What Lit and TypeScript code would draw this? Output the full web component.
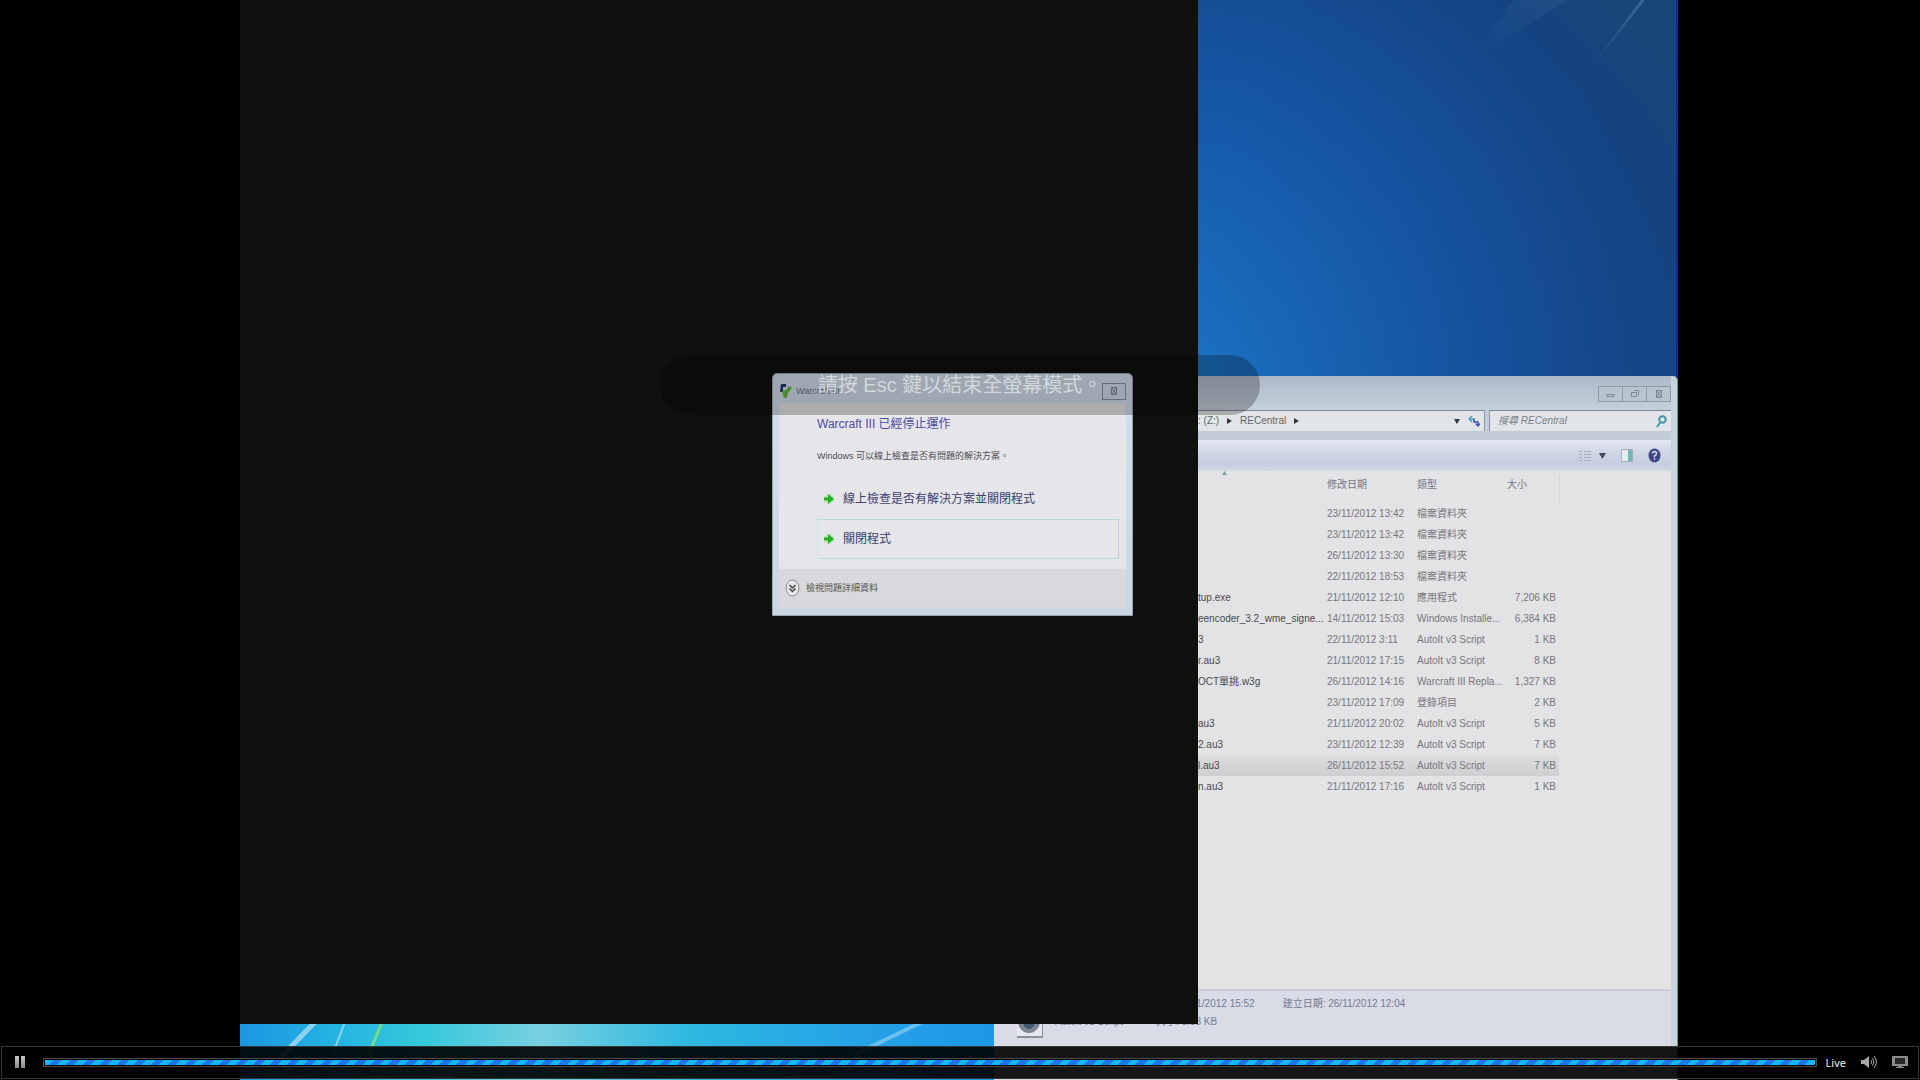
import { LitElement, html, css, svg, nothing } from "lit";
import { customElement } from "lit/decorators.js";
import { classMap } from "lit/directives/class-map.js";

interface FileRow {
  name: string;
  date: string;
  type: string;
  size: string;
  selected?: boolean;
}

const FILES: FileRow[] = [
  { name: "", date: "23/11/2012 13:42", type: "檔案資料夾", size: "" },
  { name: "", date: "23/11/2012 13:42", type: "檔案資料夾", size: "" },
  { name: "", date: "26/11/2012 13:30", type: "檔案資料夾", size: "" },
  { name: "", date: "22/11/2012 18:53", type: "檔案資料夾", size: "" },
  { name: "tup.exe", date: "21/11/2012 12:10", type: "應用程式", size: "7,206 KB" },
  { name: "eencoder_3.2_wme_signe...", date: "14/11/2012 15:03", type: "Windows Installe...", size: "6,384 KB" },
  { name: "3", date: "22/11/2012 3:11", type: "AutoIt v3 Script", size: "1 KB" },
  { name: "r.au3", date: "21/11/2012 17:15", type: "AutoIt v3 Script", size: "8 KB" },
  { name: "OCT單挑.w3g", date: "26/11/2012 14:16", type: "Warcraft III Repla...", size: "1,327 KB" },
  { name: "", date: "23/11/2012 17:09", type: "登錄項目", size: "2 KB" },
  { name: "au3", date: "21/11/2012 20:02", type: "AutoIt v3 Script", size: "5 KB" },
  { name: "2.au3", date: "23/11/2012 12:39", type: "AutoIt v3 Script", size: "7 KB" },
  { name: "l.au3", date: "26/11/2012 15:52", type: "AutoIt v3 Script", size: "7 KB", selected: true },
  { name: "n.au3", date: "21/11/2012 17:16", type: "AutoIt v3 Script", size: "1 KB" },
];

const goArrow = svg`
  <circle cx="6" cy="7" r="5" fill="#b9e8b4"/>
  <path d="M1 5.500h4V2l6 5-6 5v-3.500H1z" fill="#2bb024"/>`;

@customElement("explorer-window")
export class ExplorerWindow extends LitElement {
  static styles = css`
    :host {
      display: flex;
      flex-direction: column;
      box-sizing: border-box;
      padding-right: 6px;
      border-right: 1px solid #6f9c93;
      border-radius: 0 5px 0 0;
      background: #c6d5dc;
      color: #77777d;
      font: 10px/16px "Liberation Sans", "Noto Sans CJK TC", sans-serif;
      overflow: hidden;
    }
    button {
      font: inherit;
      color: inherit;
      padding: 0;
      border: 0;
      background: none;
      display: flex;
      align-items: center;
      justify-content: center;
    }
    svg { display: block; }
    .caption {
      display: flex;
      justify-content: flex-end;
      padding: 10px 0 8px;
      background: linear-gradient(#adb9c8, #c5d0dc);
    }
    .caption button {
      width: 25px;
      height: 16px;
      box-sizing: border-box;
      border: 1px solid #8e9aa8;
      margin-left: -1px;
      background: #b9c4d1;
    }
    .nav {
      display: flex;
      gap: 4px;
      padding: 0 0 9px 204px;
      background: #c2ccd9;
    }
    .address, .search {
      display: flex;
      align-items: center;
      height: 21px;
      box-sizing: border-box;
      border-top: 1px solid #7f8994;
      background: #e1e4e9;
    }
    .address { flex: 1; gap: 8px; padding: 0 4px 0 0; border-right: 1px solid #8f99a6; }
    .address .crumb { color: #5d6b66; }
    .grow { flex: 1; }
    .search { width: 182px; padding: 0 4px 0 8px; border-left: 1px solid #8f99a6; }
    .search input {
      flex: 1;
      min-width: 0;
      border: 0;
      padding: 0;
      background: none;
      font: inherit;
      font-style: italic;
    }
    .search input::placeholder { color: #7b8287; opacity: 1; }
    .tools {
      display: flex;
      justify-content: flex-end;
      align-items: center;
      gap: 14px;
      height: 31px;
      padding-right: 10px;
      background: linear-gradient(#e2e7f0, #cdd4e4 45%, #c6cde0 80%, #d3d9e6);
    }
    .tools .view { gap: 8px; }
    .body {
      flex: 1;
      padding-left: 204px;
      background: #e3e2e5;
    }
    table { border-collapse: collapse; table-layout: fixed; width: 361px; }
    th, td { padding: 0; height: 21px; font-weight: 400; text-align: left; white-space: nowrap; }
    thead th { height: 28px; padding-bottom: 8px; box-sizing: border-box; vertical-align: middle; color: #76768a; }
    thead .size { text-align: left; padding-left: 2px; border-right: 1px solid #d5d5da; }
    .name { width: 129px; color: #4a4a4a; }
    .date { width: 90px; }
    .type { width: 88px; }
    .size { width: 54px; text-align: right; padding-right: 3px; }
    .selected td { background: linear-gradient(#dcdbde, #cfcfd2); }
    .sort { display: block; margin: 0 0 0 24px; }
    .details {
      display: grid;
      grid-template-columns: 26px 65px max-content max-content;
      column-gap: 12px;
      align-items: start;
      height: 91px;
      box-sizing: border-box;
      padding: 5px 0 0 23px;
      border-top: 2px solid #cdced5;
      background: #d9dce6;
      color: #727a94;
      white-space: nowrap;
    }
    .details .icon { margin-top: 14px; }
    .details p { margin: 0 0 2px; }
    .details .indent { padding-left: 24px; }
    .details .created { padding-left: 16px; }
  `;

  render() {
    return html`
      <div class="caption">
        <button aria-label="最小化"><svg width="10" height="8" viewBox="0 0 10 8" fill="none" stroke="#7e8894"><path d="M1 4.500h7v2H1z"/></svg></button>
        <button aria-label="最大化"><svg width="10" height="8" viewBox="0 0 10 8" fill="none" stroke="#7e8894"><path d="M1.500 2.500h5v4h-5zM4.500 .5h4v5"/></svg></button>
        <button aria-label="關閉"><svg width="10" height="10" viewBox="0 0 10 10" fill="none" stroke="#7e8894"><path d="M2.500 1.500h5v7h-5zM3 2l4 6M7 2L3 8"/></svg></button>
      </div>
      <div class="nav">
        <div class="address">
          <span class="crumb">: (Z:)</span>
          <svg width="5" height="8" viewBox="0 0 5 8"><path d="M0 1l5 3-5 3z" fill="#33363c"/></svg>
          <span class="crumb">RECentral</span>
          <svg width="5" height="8" viewBox="0 0 5 8"><path d="M0 1l5 3-5 3z" fill="#33363c"/></svg>
          <span class="grow"></span>
          <svg width="6" height="6" viewBox="0 0 6 6"><path d="M0 1h6L3 6z" fill="#33363c"/></svg>
          <button aria-label="重新整理">
            <svg width="12" height="12" viewBox="0 0 12 12" fill="none" stroke-width="1.500"><path d="M4 1L1 4l3 3M1 4h5v3" stroke="#4fa3b8"/><path d="M6 4v3h4V11M7.500 8.500L10 11l2-2.500" stroke="#4a55b4"/></svg>
          </button>
        </div>
        <label class="search">
          <input type="text" placeholder="搜尋 RECentral" aria-label="搜尋 RECentral" />
          <svg width="11" height="13" viewBox="0 0 11 13" fill="none" stroke="#4695a6" stroke-width="2"><circle cx="6.500" cy="4.500" r="3.200"/><path d="M4.500 7L1 12"/></svg>
        </label>
      </div>
      <div class="tools">
        <button class="view" aria-label="變更檢視">
          <svg width="12" height="12" viewBox="0 0 12 12" stroke="#a9afbd"><path d="M0 1.500h3M5 1.500h7M0 4.500h3M5 4.500h7M0 7.500h3M5 7.500h7M0 10.500h3M5 10.500h7"/></svg>
          <svg width="7" height="7" viewBox="0 0 7 7"><path d="M0 1h7L3.500 7z" fill="#444a5c"/></svg>
        </button>
        <button aria-label="預覽窗格">
          <svg width="14" height="15" viewBox="0 0 14 15"><path d="M1.500 1.500h11v12h-11z" fill="#e4eaf0" stroke="#a2b0bc"/><path d="M8 2h4v11H8z" fill="#6fb7b0"/></svg>
        </button>
        <button aria-label="說明">
          <svg width="13" height="15" viewBox="0 0 13 15"><ellipse cx="6.500" cy="7.500" rx="6" ry="7" fill="#3c4784"/><path d="M4.500 5.500q0-2 2-2t2 2q0 1.300-2 2.500v1.500M6.500 10.500v1.500" fill="none" stroke="#d3d8ec" stroke-width="1.500"/></svg>
        </button>
      </div>
      <div class="body">
        <svg class="sort" width="5" height="4" viewBox="0 0 5 4"><path d="M2.500 0L5 4H0z" fill="#7fa0a5"/></svg>
        <table>
          <thead>
            <tr>
              <th class="name" aria-label="名稱"></th>
              <th class="date">修改日期</th>
              <th class="type">類型</th>
              <th class="size">大小</th>
            </tr>
          </thead>
          <tbody>
            ${FILES.map(
              (f) => html`<tr class=${classMap({ selected: !!f.selected })}>
                <td class="name">${f.name || nothing}</td>
                <td class="date">${f.date}</td>
                <td class="type">${f.type}</td>
                <td class="size">${f.size || nothing}</td>
              </tr>`
            )}
          </tbody>
        </table>
      </div>
      <div class="details">
        <svg class="icon" width="26" height="28" viewBox="0 0 26 28"><path d="M0 0h26v27H0z" fill="#e6e7ec"/><path d="M0 27h26V2" fill="none" stroke="#8c9097" stroke-width="2"/><ellipse cx="12" cy="11" rx="11" ry="12" fill="#7b858f"/><ellipse cx="12" cy="11" rx="6" ry="8" fill="#3f5870"/></svg>
        <div><p>l.au3</p><p>AutoIt v3 Script</p></div>
        <div><p>修改日期: 26/11/2012 15:52</p><p class="indent">大小: 6.58 KB</p></div>
        <div class="created"><p>建立日期: 26/11/2012 12:04</p></div>
      </div>
    `;
  }
}

@customElement("crash-dialog")
export class CrashDialog extends LitElement {
  static styles = css`
    :host {
      display: flex;
      flex-direction: column;
      box-sizing: border-box;
      padding: 0 6px 8px;
      border: 1px solid #98a5b2;
      border-radius: 5px 5px 0 0;
      background: linear-gradient(#d3dfee, #ccd6e0);
      color: #4b4b52;
      font: 12px/16px "Liberation Sans", "Noto Sans CJK TC", sans-serif;
    }
    svg { display: block; }
    button {
      font: inherit;
      color: inherit;
      border: 0;
      background: none;
      padding: 0;
      display: flex;
      align-items: center;
    }
    .caption { display: flex; align-items: center; gap: 3px; height: 24px; padding-top: 5px; }
    .caption span { flex: 1; color: #6d7884; font-size: 9px; }
    .caption .close {
      justify-content: center;
      width: 24px;
      height: 17px;
      box-sizing: border-box;
      border: 1px solid #8a93a0;
    }
    .content {
      flex: 1;
      padding: 12px 7px 8px 38px;
      background: #e6e6ea;
    }
    h1 { margin: 0 0 15px; font-size: 12px; line-height: 18px; font-weight: 400; color: #4a4aa0; }
    p { margin: 0 0 15px; font-size: 9px; }
    .command {
      gap: 8px;
      width: 100%;
      height: 40px;
      box-sizing: border-box;
      padding: 0 5px;
      border: 1px solid transparent;
      color: #3c3f6e;
    }
    .focused { border-color: #b4dde2 #c3cbe0 #b4dde2 #c9e4e8; }
    .more {
      gap: 6px;
      height: 38px;
      padding: 0 6px;
      background: #d9d8dc;
      color: #56564c;
      font-size: 9px;
    }
  `;

  render() {
    return html`
      <div class="caption">
        <svg width="14" height="16" viewBox="0 0 14 16"><path d="M2 1h5v3H4v5H1z" fill="#2a3270"/><path d="M3 8l4-1 3-4 3 2-4 5-1 5H5z" fill="#66b83c"/></svg>
        <span>Warcraft III</span>
        <button class="close" aria-label="關閉"><svg width="10" height="10" viewBox="0 0 10 10" fill="none" stroke="#7e8894"><path d="M2.500 1.500h5v7h-5zM3 2l4 6M7 2L3 8"/></svg></button>
      </div>
      <div class="content">
        <h1>Warcraft III 已經停止運作</h1>
        <p>Windows 可以線上檢查是否有問題的解決方案。</p>
        <button class="command"><svg width="12" height="14" viewBox="0 0 12 14">${goArrow}</svg>線上檢查是否有解決方案並關閉程式</button>
        <button class="command focused"><svg width="12" height="14" viewBox="0 0 12 14">${goArrow}</svg>關閉程式</button>
      </div>
      <button class="more">
        <svg width="15" height="18" viewBox="0 0 15 18" fill="none"><ellipse cx="7.500" cy="9" rx="6.500" ry="8" fill="#e6e6e9" stroke="#8d8d92"/><path d="M4.500 6l3 3 3-3M4.500 9.500l3 3 3-3" stroke="#444" stroke-width="1.500"/></svg>
        檢視問題詳細資料
      </button>
    `;
  }
}

@customElement("control-bar")
export class ControlBar extends LitElement {
  static styles = css`
    :host {
      display: flex;
      align-items: center;
      box-sizing: border-box;
      height: 33px;
      padding: 0 10px 0 13px;
      border: 1px solid #363636;
      background: rgba(0, 0, 0, 0.9);
      color: #ececec;
      font: 11px/15px "Noto Sans", sans-serif;
    }
    button { border: 0; padding: 0; background: none; display: block; }
    svg { display: block; }
    .track {
      flex: 1;
      height: 9px;
      box-sizing: border-box;
      margin: 0 9px 0 17px;
      padding: 1px;
      border: 1px solid #4a4a4a;
      background: #000;
    }
    .fill {
      height: 5px;
      background: repeating-linear-gradient(135deg, #16b6f8 0 6px, #1c78ea 6px 12px);
    }
    .volume { margin-left: 15px; }
    .screen { margin-left: 14px; }
  `;

  render() {
    return html`
      <button aria-label="暫停">
        <svg width="11" height="13" viewBox="0 0 11 13"><defs><linearGradient id="g" x2="0" y2="1"><stop stop-color="#c8c8c8"/><stop offset="1" stop-color="#8a8a8a"/></linearGradient></defs><path d="M0 0h4v12H0zM6 0h4v12H6z" fill="url(#g)"/></svg>
      </button>
      <div class="track" role="progressbar" aria-label="Live"><div class="fill"></div></div>
      <span>Live</span>
      <button class="volume" aria-label="音量">
        <svg width="17" height="15" viewBox="0 0 17 15" fill="none" stroke="#a8a8a8"><path d="M0 5h3l5-4v12L3 9H0z" fill="#a8a8a8" stroke="none"/><path d="M10 5q1.500 2 0 4M11.500 3q3 4 0 8M13 1q5 6 0 12"/></svg>
      </button>
      <button class="screen" aria-label="結束全螢幕">
        <svg width="16" height="13" viewBox="0 0 16 13"><path d="M0 0h16v10H0z" fill="#8a8a8a"/><path d="M3 2h10v6H3z" fill="#262626"/><path d="M6 10h4v1h2v1H4v-1h2z" fill="#8a8a8a"/></svg>
      </button>
    `;
  }
}

@customElement("app-root")
export class AppRoot extends LitElement {
  static styles = css`
    :host {
      display: block;
      position: relative;
      height: 100vh;
      overflow: hidden;
      background: #000;
    }
    .desktop {
      position: relative;
      height: 100%;
      margin: 0 242px 0 240px;
      overflow: hidden;
      background:
        linear-gradient(#1c2496, #1c2496) right / 2px 100% no-repeat,
        linear-gradient(105deg, rgba(26, 118, 200, 0) 60%, rgba(20, 60, 116, 0.3) 85%),
        radial-gradient(ellipse 620px 600px at 920px 420px, #1c78ca, #1556a6 55%, #144482 90%, #1a4a7c);
    }
    .streaks { position: absolute; top: 0; right: 0; }
    .ground { position: absolute; left: 0; bottom: 0; }
    explorer-window { position: absolute; left: 754px; right: 0; top: 376px; bottom: 0; }
    .game {
      position: absolute;
      left: 0;
      top: 0;
      width: 958px;
      bottom: 56px;
      background: #0e110e;
    }
    crash-dialog { position: absolute; left: 532px; top: 373px; width: 361px; height: 243px; }
    .hint {
      position: absolute;
      left: 50%;
      top: 355px;
      transform: translateX(-50%);
      box-sizing: border-box;
      width: 600px;
      padding: 15px 0;
      border-radius: 30px;
      background: rgba(0, 0, 0, 0.25);
      color: rgba(228, 232, 236, 0.75);
      text-align: center;
      font: 20px/30px "Liberation Sans", "Noto Sans CJK TC", sans-serif;
    }
    control-bar { position: absolute; left: 1px; right: 1px; bottom: 1px; }
  `;

  render() {
    return html`
      <main class="desktop">
        <svg class="streaks" width="260" height="120" viewBox="0 0 260 120">
          <defs>
            <linearGradient id="ray" x1="1" y1="0" x2="0" y2="1"><stop stop-color="#5a94bc" stop-opacity=".45"/><stop offset="1" stop-color="#5a94bc" stop-opacity="0"/></linearGradient>
          </defs>
          <path d="M223 0h4L165 78z" fill="url(#ray)"/>
          <path d="M150 0L50 62 95 0z" fill="url(#ray)" fill-opacity=".3"/>
        </svg>
        <svg class="ground" width="754" height="58" viewBox="0 0 754 58">
          <defs><linearGradient id="sky"><stop stop-color="#1c96e2"/><stop offset=".12" stop-color="#24b2e2"/><stop offset=".24" stop-color="#34c8dc"/><stop offset=".4" stop-color="#78d0e0"/><stop offset=".6" stop-color="#2cb8e0"/><stop offset=".8" stop-color="#26a4e6"/><stop offset="1" stop-color="#1c98e6"/></linearGradient></defs>
          <path d="M0 0h754v58H0z" fill="url(#sky)"/>
          <path d="M75 0L42 34" stroke="#a8dcf4" stroke-opacity=".8" stroke-width="5"/>
          <path d="M105 0L92 34" stroke="#8cd8f0" stroke-width="2"/>
          <path d="M142 0L128 34" stroke="#74dc84" stroke-width="3"/>
          <path d="M682 0L616 32" stroke="#7cc8f0" stroke-opacity=".8" stroke-width="4"/>
        </svg>
        <explorer-window></explorer-window>
        <section class="game" aria-label="Warcraft III"></section>
        <crash-dialog></crash-dialog>
      </main>
      <div class="hint" role="status">請按 Esc 鍵以結束全螢幕模式。</div>
      <control-bar></control-bar>
    `;
  }
}
